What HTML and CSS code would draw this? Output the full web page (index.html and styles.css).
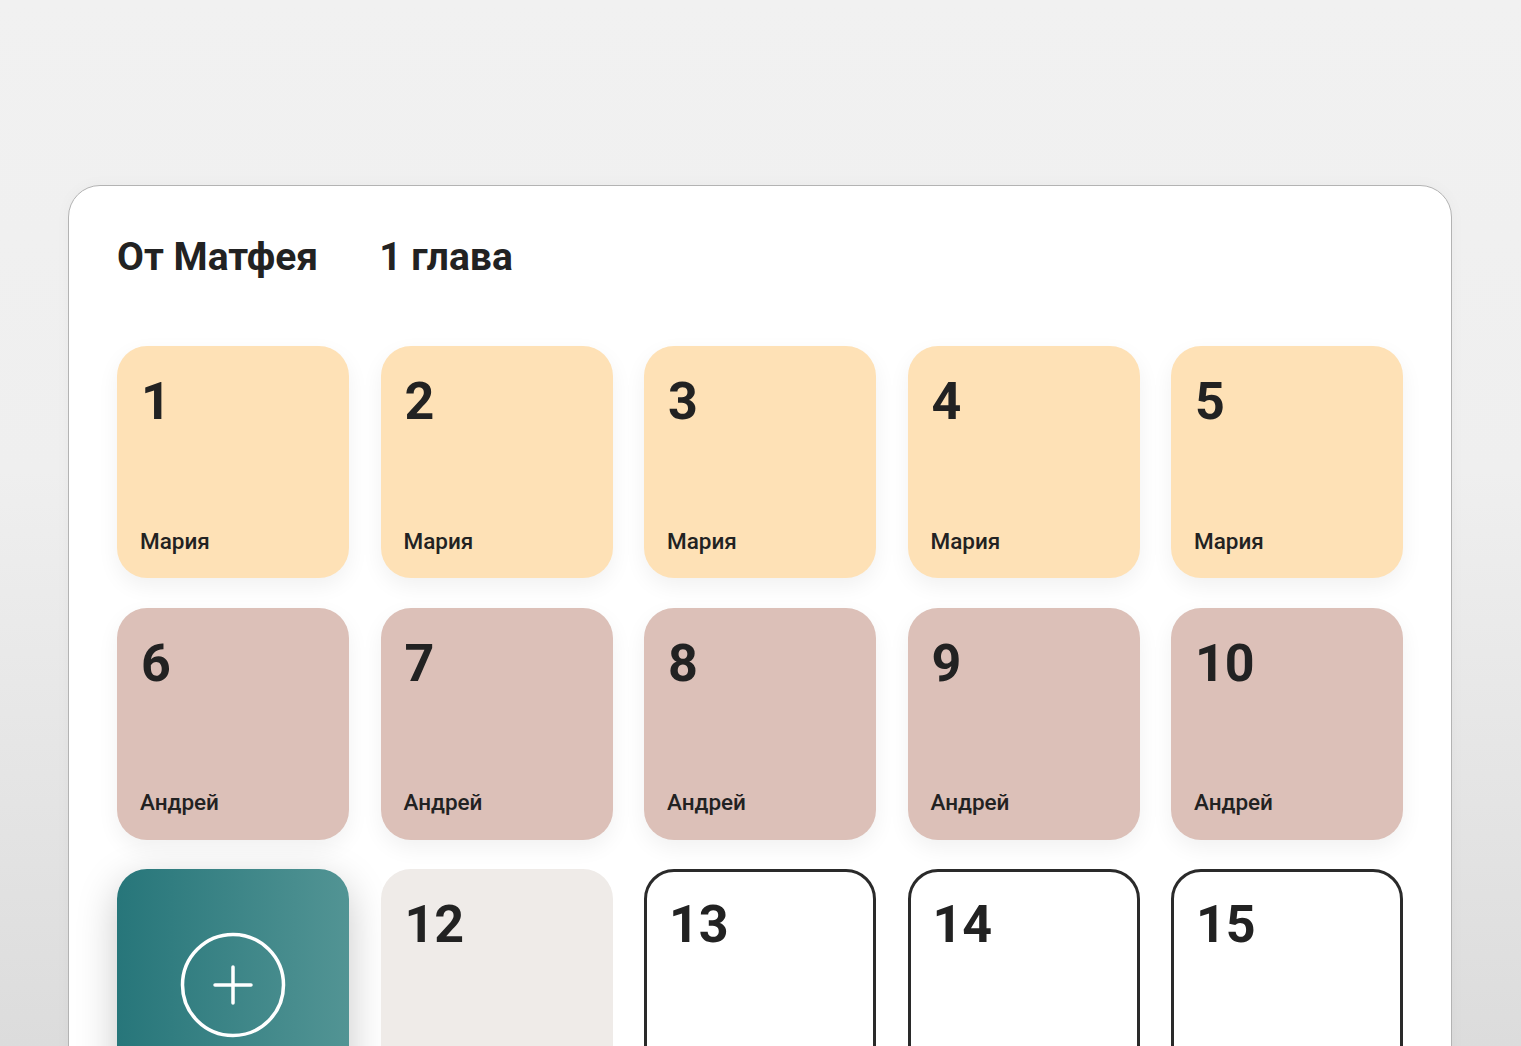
FILE: index.html
```html
<!DOCTYPE html>
<html lang="ru">
<head>
<meta charset="utf-8">
<title>От Матфея — 1 глава</title>
<link rel="stylesheet" href="styles.css">
</head>
<body>
<div class="screen">
  <section class="panel">
    <header class="head">
      <h1 class="book">От Матфея</h1>
      <h2 class="chapter">1 глава</h2>
    </header>
    <div class="grid">
      <div class="card yellow"><span class="num">1</span><span class="name">Мария</span></div>
      <div class="card yellow"><span class="num">2</span><span class="name">Мария</span></div>
      <div class="card yellow"><span class="num">3</span><span class="name">Мария</span></div>
      <div class="card yellow"><span class="num">4</span><span class="name">Мария</span></div>
      <div class="card yellow"><span class="num">5</span><span class="name">Мария</span></div>
      <div class="card pink"><span class="num">6</span><span class="name">Андрей</span></div>
      <div class="card pink"><span class="num">7</span><span class="name">Андрей</span></div>
      <div class="card pink"><span class="num">8</span><span class="name">Андрей</span></div>
      <div class="card pink"><span class="num">9</span><span class="name">Андрей</span></div>
      <div class="card pink"><span class="num">10</span><span class="name">Андрей</span></div>
      <div class="card add">
        <svg class="plus" width="108" height="108" viewBox="0 0 108 108">
          <circle cx="54" cy="54" r="50.5" fill="none" stroke="#fff" stroke-width="3.5"/>
          <path d="M54 36 V72 M36 54 H72" stroke="#fff" stroke-width="3.5" stroke-linecap="round"/>
        </svg>
      </div>
      <div class="card grey"><span class="num">12</span></div>
      <div class="card outline"><span class="num">13</span></div>
      <div class="card outline"><span class="num">14</span></div>
      <div class="card outline"><span class="num">15</span></div>
    </div>
  </section>
</div>
</body>
</html>
```
FILE: styles.css
```css
* { box-sizing: border-box; }
html, body { margin: 0; padding: 0; }
body {
  width: 1521px;
  height: 1046px;
  overflow: hidden;
  font-family: Roboto, "Liberation Sans", sans-serif;
  color: #222222;
  background: linear-gradient(180deg, #f1f1f1 0%, #efefef 45%, #dcdcdc 100%);
}
.screen {
  padding: 185px 69px 0 68px;
}
.panel {
  background: #ffffff;
  border: 1px solid #b3b3b3;
  border-radius: 32px;
  padding: 52px 48px 60px 48px;
  height: 1000px;
  box-shadow: 0 0 16px rgba(0,0,0,0.03);
}
.head {
  display: flex;
  gap: 61px;
  align-items: baseline;
  height: 38px;
}
.book, .chapter {
  margin: 0;
  font-size: 39px;
  line-height: 1;
  font-weight: 700;
  letter-spacing: 0;
}
.grid {
  margin-top: 70px;
  display: grid;
  grid-template-columns: repeat(5, 232px);
  grid-auto-rows: 232px;
  column-gap: 31.5px;
  row-gap: 29.5px;
}
.card {
  border-radius: 30px;
  padding: 30px 24px 26px 23px;
  display: flex;
  flex-direction: column;
  justify-content: space-between;
  box-shadow: 0 8px 22px rgba(0,0,0,0.06);
}
.num {
  font-size: 52px;
  line-height: 1;
  font-weight: 700;
  padding-left: 1px;
}
.name {
  font-size: 22.5px;
  line-height: 1;
  font-weight: 500;
}
.yellow { background: #fee1b6; }
.pink { background: #dcc0b8; }
.grey { background: #efebe8; box-shadow: none; }
.outline {
  background: #ffffff;
  border: 3px solid #2a2a2a;
  padding: 27px 21px 23px 21px;
  box-shadow: none;
}
.add {
  background: linear-gradient(90deg, #27767a 0%, #529494 100%);
  align-items: center;
  justify-content: center;
  padding: 0;
  box-shadow: 0 12px 40px rgba(0,0,0,0.22);
}
.plus { display: block; }
```
